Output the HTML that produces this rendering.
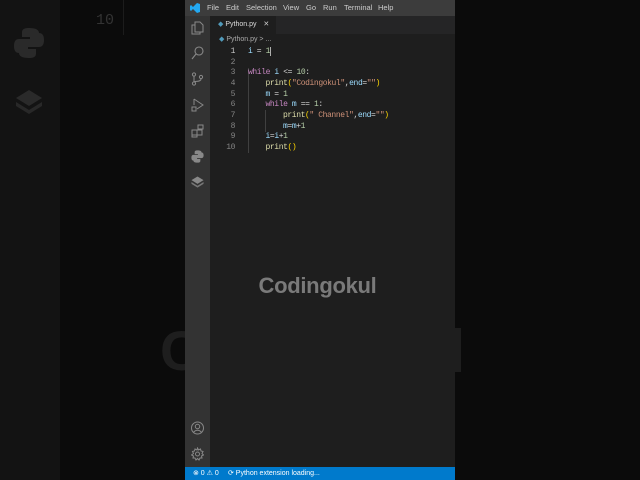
<!DOCTYPE html>
<html><head><meta charset="utf-8"><style>
*{margin:0;padding:0;box-sizing:border-box}
body{width:640px;height:480px;background:#0b0b0b;position:relative;overflow:hidden;font-family:"Liberation Sans",sans-serif}
.abs{position:absolute}
#leftbar{left:0;top:0;width:60px;height:480px;background:#131313}
#panel{left:185px;top:0;width:270px;height:480px;background:#1e1e1e;overflow:hidden}
#title{left:0;top:0;width:270px;height:16px;background:#3c3c3c;color:#ccc;font-size:7.5px;line-height:16px}
#act{left:0;top:16px;width:25px;height:451px;background:#333}
#tabs{left:25px;top:16px;width:245px;height:18px;background:#252526}
#tab{left:25px;top:16px;width:66px;height:18px;background:#1e1e1e;color:#ddd;font-size:7px;line-height:18px;padding-left:8px}
#crumb{left:34px;top:35px;color:#aaa;font-size:7px;line-height:10px}
#status{left:0;top:467px;width:270px;height:13px;background:#007acc;color:#fff;font-size:7px;line-height:13px}
.code{font-family:"Liberation Mono",monospace;font-size:8px;letter-spacing:-0.4px;color:#d4d4d4;white-space:pre}
.ln{position:absolute;left:30px;width:20px;text-align:right;color:#858585}
.cl{position:absolute;left:63px}
.k{color:#c586c0}.f{color:#dcdcaa}.s{color:#ce9178}.v{color:#9cdcfe}.n{color:#b5cea8}.p{color:#ffd700}
svg{position:absolute}
</style></head><body>
<div class="abs" id="leftbar"></div>
<div class="abs code" style="left:96px;top:12px;font-size:15px;letter-spacing:0;color:#333">10</div>
<div class="abs" style="left:123px;top:0;width:1px;height:35px;background:#1c1c1c"></div>
<svg style="left:14px;top:27px" width="30" height="32" viewBox="0 0 30 32"><path d="M15 1c-7 0-7 3-7 5v4h8v2H5c-3 0-5 2-5 7s2 7 5 7h3v-5c0-3 2-5 5-5h8c2 0 4-2 4-4V6c0-3-3-5-10-5z" fill="#2a2a2a"/><path d="M15 31c7 0 7-3 7-5v-4h-8v-2h11c3 0 5-2 5-7s-2-7-5-7h-3v5c0 3-2 5-5 5H9c-2 0-4 2-4 4v6c0 3 3 5 10 5z" fill="#2a2a2a"/></svg>
<svg style="left:15px;top:89px" width="28" height="28" viewBox="0 0 28 28"><path d="M14 1L27 9L14 17L1 9z" fill="#2a2a2a"/><path d="M1 13l13 8 13-8v4l-13 8-13-8z" fill="#282828"/></svg>
<div class="abs" style="left:160px;top:318px;font-size:56px;font-weight:bold;color:#1e1e1e">C</div>
<div class="abs" style="left:455px;top:328px;width:6px;height:44px;background:#1e1e1e"></div>
<div class="abs" id="panel">
 <div class="abs" id="title"><svg style="left:5px;top:3px" width="10" height="10" viewBox="0 0 10 10"><path d="M7 0L3 4 1 2 0 3v4l1 1 2-2 4 4 3-1V1z" fill="#23a9f2"/></svg>
 <span class="abs" style="left:22px">File</span><span class="abs" style="left:41px">Edit</span><span class="abs" style="left:61px">Selection</span><span class="abs" style="left:98px">View</span><span class="abs" style="left:121px">Go</span><span class="abs" style="left:138px">Run</span><span class="abs" style="left:159px">Terminal</span><span class="abs" style="left:193px">Help</span></div>
 <div class="abs" id="act">
  <svg style="left:6px;top:5px" width="13" height="14" viewBox="0 0 13 14" fill="none" stroke="#888" stroke-width="1"><path d="M4 1h5l3 3v7H4z"/><path d="M4 4H1v9h8v-2"/></svg>
  <svg style="left:6px;top:30px" width="13" height="14" viewBox="0 0 13 14" fill="none" stroke="#888" stroke-width="1.1"><circle cx="8" cy="5" r="4"/><path d="M5 8L1 13"/></svg>
  <svg style="left:6px;top:56px" width="13" height="14" viewBox="0 0 13 14" fill="none" stroke="#888" stroke-width="1"><circle cx="3" cy="2.5" r="1.6"/><circle cx="3" cy="11.5" r="1.6"/><circle cx="10" cy="5" r="1.6"/><path d="M3 4v6M10 7c0 3-6 2-7 3"/></svg>
  <svg style="left:6px;top:82px" width="13" height="14" viewBox="0 0 13 14" fill="none" stroke="#888" stroke-width="1"><path d="M3 1l9 6-6 4M3 1v6"/><rect x="1" y="9" width="4" height="4"/></svg>
  <svg style="left:6px;top:108px" width="13" height="14" viewBox="0 0 13 14" fill="none" stroke="#888" stroke-width="1"><rect x="1" y="6" width="5" height="5"/><rect x="6" y="6" width="5" height="5"/><rect x="1" y="11" width="5" height="2"/><rect x="7" y="1" width="5" height="4"/></svg>
  <svg style="left:6px;top:134px" width="13" height="13" viewBox="0 0 30 32"><path d="M15 1c-7 0-7 3-7 5v4h8v2H5c-3 0-5 2-5 7s2 7 5 7h3v-5c0-3 2-5 5-5h8c2 0 4-2 4-4V6c0-3-3-5-10-5zM15 31c7 0 7-3 7-5v-4h-8v-2h11c3 0 5-2 5-7s-2-7-5-7h-3v5c0 3-2 5-5 5H9c-2 0-4 2-4 4v6c0 3 3 5 10 5z" fill="#888"/></svg>
  <svg style="left:6px;top:160px" width="13" height="13" viewBox="0 0 28 28"><path d="M14 1L27 9L14 17L1 9z" fill="#888"/><path d="M1 13l13 8 13-8v4l-13 8-13-8z" fill="#777"/></svg>
  <svg style="left:6px;top:405px" width="13" height="14" viewBox="0 0 13 14" fill="none" stroke="#888" stroke-width="1"><circle cx="6.5" cy="7" r="6"/><circle cx="6.5" cy="5.5" r="2.2"/><path d="M2.5 11.5c2-3 6-3 8 0"/></svg>
  <svg style="left:6px;top:431px" width="13" height="14" viewBox="0 0 13 14" fill="none" stroke="#888" stroke-width="1"><circle cx="6.5" cy="7" r="2"/><path d="M6.5 1l1 2 2-1 .5 2 2 .5-1 2 1.5 1.5-2 1 .5 2-2 0-1 2-1.5-1.5-1.5 1.5-1-2-2 0 .5-2-2-1L2.5 6.5l-1-2 2-.5.5-2 2 1z"/></svg>
 </div>
 <div class="abs" id="tabs"></div>
 <div class="abs" id="tab"><span style="color:#519aba">◆</span> Python.py <span style="margin-left:5px;color:#ccc">✕</span></div>
 <div class="abs" id="crumb"><span style="color:#519aba">◆</span> Python.py &gt; ...</div>
 <div class="abs code" style="left:0;top:46px;width:270px;height:110px">
  <div style="position:absolute;left:63px;top:22px;width:1px;height:85px;background:#404040"></div>
  <div style="position:absolute;left:80px;top:64px;width:1px;height:22px;background:#404040"></div>
  <div class="ln" style="top:1px;color:#c6c6c6">1</div><div class="cl" style="top:1px"><span class="v">i</span> = <span class="n">1</span><span style="border-left:1px solid #aeafad"></span></div>
  <div class="ln" style="top:11.7px">2</div>
  <div class="ln" style="top:22.4px">3</div><div class="cl" style="top:22.4px"><span class="k">while</span> <span class="v">i</span> &lt;= <span class="n">10</span>:</div>
  <div class="ln" style="top:33px">4</div><div class="cl" style="top:33px;left:80.5px"><span class="f">print</span><span class="p">(</span><span class="s">"Codingokul"</span>,<span class="v">end</span>=<span class="s">""</span><span class="p">)</span></div>
  <div class="ln" style="top:43.7px">5</div><div class="cl" style="top:43.7px;left:80.5px"><span class="v">m</span> = <span class="n">1</span></div>
  <div class="ln" style="top:54.4px">6</div><div class="cl" style="top:54.4px;left:80.5px"><span class="k">while</span> <span class="v">m</span> == <span class="n">1</span>:</div>
  <div class="ln" style="top:65px">7</div><div class="cl" style="top:65px;left:98px"><span class="f">print</span><span class="p">(</span><span class="s">" Channel"</span>,<span class="v">end</span>=<span class="s">""</span><span class="p">)</span></div>
  <div class="ln" style="top:75.7px">8</div><div class="cl" style="top:75.7px;left:98px"><span class="v">m</span>=<span class="v">m</span>+<span class="n">1</span></div>
  <div class="ln" style="top:86.4px">9</div><div class="cl" style="top:86.4px;left:80.5px"><span class="v">i</span>=<span class="v">i</span>+<span class="n">1</span></div>
  <div class="ln" style="top:97px">10</div><div class="cl" style="top:97px;left:80.5px"><span class="f">print</span><span class="p">()</span></div>
 </div>
 <div class="abs" style="left:0;top:273px;width:265px;text-align:center;font-size:22px;font-weight:bold;color:#7a7a7a;letter-spacing:-0.3px">Codingokul</div>
 <div class="abs" id="status"><span class="abs" style="left:8px">⊗ 0 ⚠ 0</span><span class="abs" style="left:43px">⟳ Python extension loading...</span></div>
</div>
</body></html>
